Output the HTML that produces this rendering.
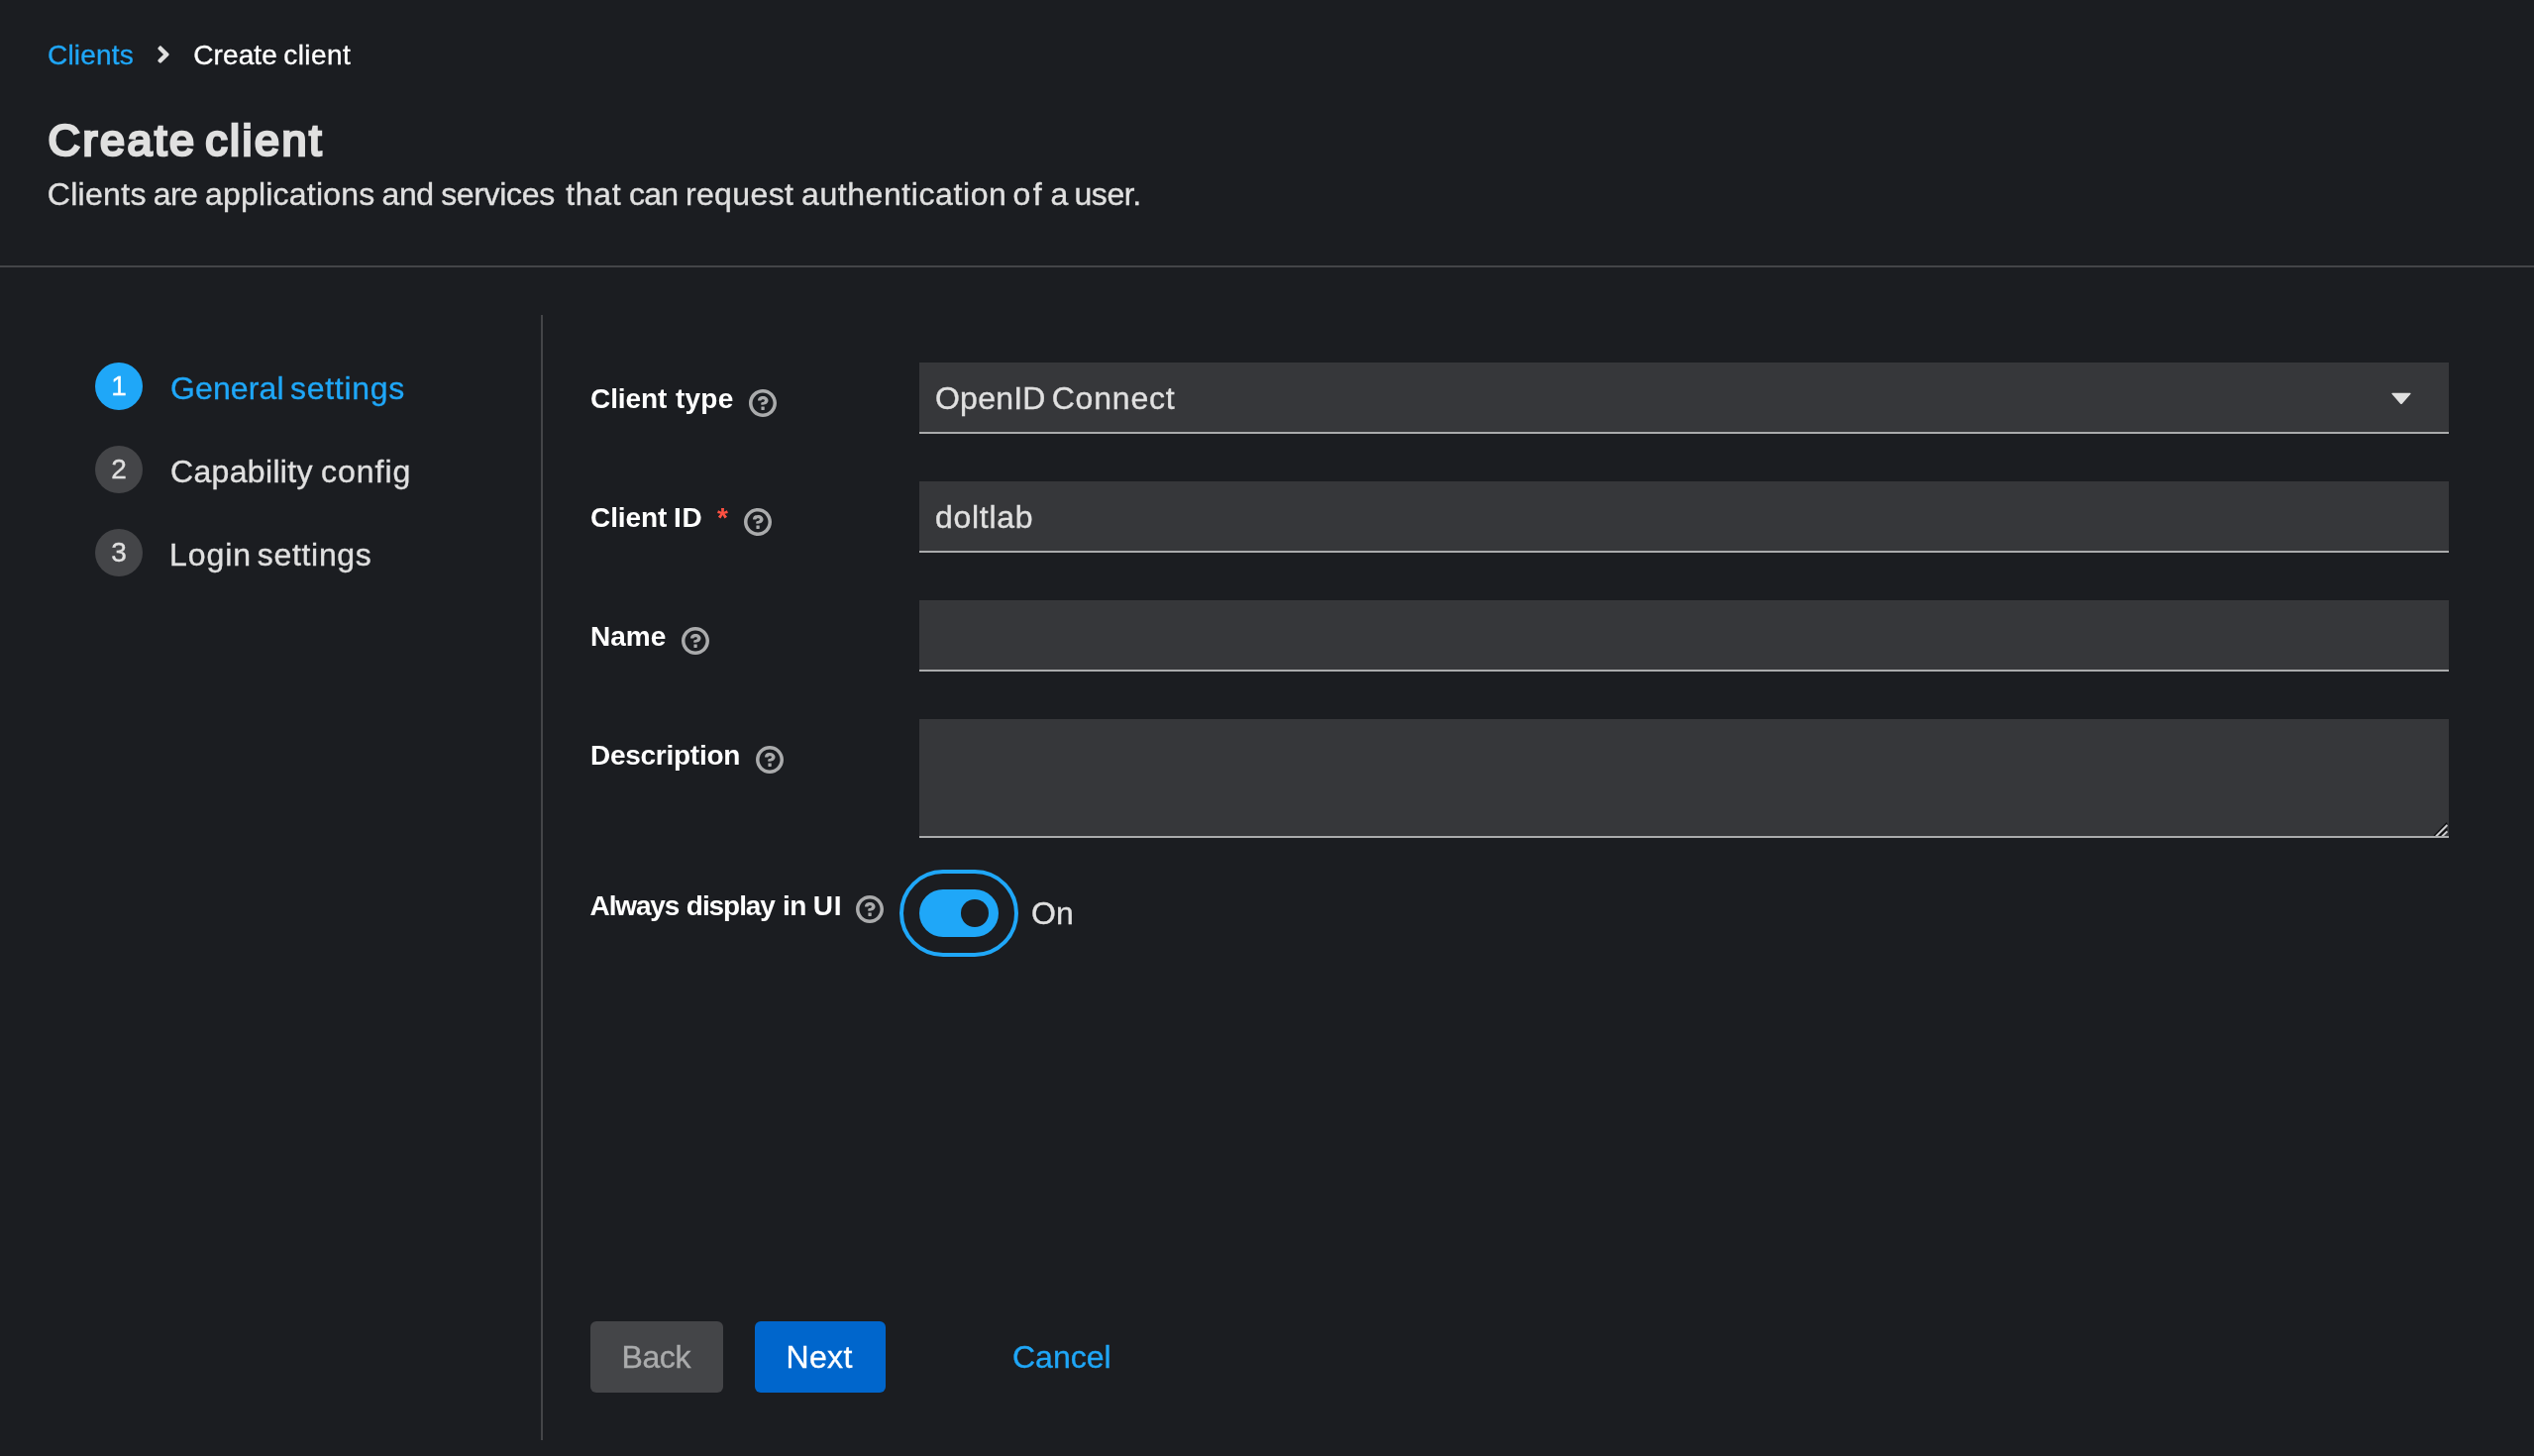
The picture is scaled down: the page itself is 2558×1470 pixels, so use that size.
<!DOCTYPE html>
<html lang="en">
<head>
<meta charset="utf-8">
<title>Create client</title>
<style>
*{box-sizing:border-box;margin:0;padding:0}
html,body{width:2558px;height:1470px;background:#1b1d21}
body{position:relative;font-family:"Liberation Sans",sans-serif;color:#e0e0e0;-webkit-font-smoothing:antialiased}
#app{position:absolute;left:0;top:0;width:2558px;height:1470px;will-change:transform}
.t{position:absolute;white-space:nowrap;line-height:1;display:block}
a{color:#1fa7f8;text-decoration:none}
/* header */
.bc,.desc,.nav,.val,.num,.btn span{-webkit-text-stroke:.35px currentColor}
.bc{font-size:28px}
.bc.cur{color:#fff}
h1.t{font-size:45px;font-weight:400;color:#e0e0e0;-webkit-text-stroke:2.7px #e0e0e0}
.desc{font-size:32px}
.w{position:absolute;top:0;white-space:pre}
.hr{position:absolute;left:0;top:268px;width:2558px;height:2px;background:#444548}
.vr{position:absolute;left:546px;top:318px;width:2px;height:1136px;background:#444548}
/* nav */
.num{position:absolute;left:96px;width:48px;height:48px;border-radius:50%;background:#444548;color:#e0e0e0;font-size:28px;line-height:48px;text-align:center}
.num.on{background:#1fa7f8;color:#fff}
.nav{font-size:32px}
.nav.on{color:#1fa7f8}
/* form */
.lbl{font-size:28px;font-weight:700;color:#fff}
.req{font-size:28px;font-weight:700;color:#fe5142}
.help{position:absolute;width:28px;height:28px;fill:#aaabac}
.fc{position:absolute;left:928px;width:1544px;height:72px;background:#36373a;border-bottom:2px solid #aaabac}
.val{font-size:32px}
.sw{position:absolute;left:928px;top:898px;width:80px;height:48px;border-radius:24px;background:#1fa7f8;outline:4px solid #1fa7f8;outline-offset:16px}
.sw i{position:absolute;left:42px;top:10px;width:28px;height:28px;border-radius:50%;background:#1b1d21}
.btn{position:absolute;top:1334px;height:72px;border-radius:6px;font-size:32px}
.btn span{position:absolute;white-space:nowrap;line-height:1}
</style>
</head>
<body>
<div id="app">
<!-- breadcrumb -->
<nav>
  <a class="t bc" style="left:48px;top:42px;letter-spacing:.2px">Clients</a>
  <svg style="position:absolute;left:157.6px;top:41px;width:14px;height:28px" viewBox="0 0 256 512"><path fill="#e0e0e0" d="M224.3 273l-136 136c-9.4 9.4-24.6 9.4-33.9 0l-22.6-22.6c-9.4-9.4-9.4-24.6 0-33.9l96.4-96.4-96.4-96.4c-9.4-9.4-9.4-24.6 0-33.9L54.3 103c9.4-9.4 24.6-9.4 33.9 0l136 136c9.5 9.4 9.5 24.6.1 34z"/></svg>
  <span class="t bc cur" style="left:195px;top:42px"><span style="margin-left:0.14px;letter-spacing:0.13px">Create</span> <span style="margin-left:-1.54px;letter-spacing:0.46px">client</span></span>
</nav>
<h1 class="t" style="left:49px;top:119px"><span style="margin-left:-0.56px;letter-spacing:2.50px">Create</span> <span style="margin-left:-3.92px;letter-spacing:2.47px">client</span></h1>
<p class="t desc" style="left:0;top:180px"><span class="w" style="left:47.8px;letter-spacing:0.30px">Clients </span><span class="w" style="left:154.7px;letter-spacing:-0.55px">are </span><span class="w" style="left:207.0px;letter-spacing:0.20px">applications </span><span class="w" style="left:385.6px;letter-spacing:-0.50px">and </span><span class="w" style="left:445.2px;letter-spacing:-0.34px">services </span><span class="w" style="left:571.2px;letter-spacing:0.67px">that </span><span class="w" style="left:634.9px;letter-spacing:-0.75px">can </span><span class="w" style="left:691.9px;letter-spacing:0.38px">request </span><span class="w" style="left:809.0px;letter-spacing:0.58px">authentication </span><span class="w" style="left:1022.5px;letter-spacing:2.50px">of </span><span class="w" style="left:1060.4px;letter-spacing:0.00px">a </span><span class="w" style="left:1084.4px;letter-spacing:-0.40px">user. </span></p>
<div class="hr"></div>
<div class="vr"></div>

<!-- wizard nav -->
<div class="num on" style="top:366px">1</div>
<a class="t nav on" style="left:172px;top:376px;"><span style="letter-spacing:0.12px">General</span> <span style="margin-left:-2.52px;letter-spacing:0.70px">settings</span></a>
<div class="num" style="top:450px">2</div>
<span class="t nav" style="left:172px;top:460px;"><span style="letter-spacing:0.33px">Capability</span> <span style="margin-left:-0.70px;letter-spacing:0.97px">config</span></span>
<div class="num" style="top:534px">3</div>
<span class="t nav" style="left:171px;top:544px;"><span style="letter-spacing:0.92px">Login</span> <span style="margin-left:-2.94px;letter-spacing:0.67px">settings</span></span>

<!-- form -->
<label class="t lbl" style="left:597px;top:389px"><span style="margin-left:-0.98px;letter-spacing:-0.11px">Client</span> <span style="margin-left:0.98px;letter-spacing:0.28px">type</span></label>
<div class="fc" style="top:366px"><span class="t val" style="left:16px;top:20px;"><span style="letter-spacing:0.22px">OpenID</span> <span style="margin-left:-2.80px;letter-spacing:0.80px">Connect</span></span>
  <svg style="position:absolute;left:1484px;top:29px;width:24px;height:16px" viewBox="0 0 24 16"><path d="M3.2 1.8 H20.8 Q22.4 1.8 21.3 3 L13 12.6 Q12 13.6 11 12.6 L2.7 3 Q1.6 1.8 3.2 1.8 Z" fill="#e0e0e0"/></svg>
</div>

<label class="t lbl" style="left:597px;top:509px;"><span style="margin-left:-0.98px;letter-spacing:-0.11px">Client</span> <span style="margin-left:-0.84px;letter-spacing:0.56px">ID</span></label>
<span class="t req" style="left:724px;top:509px">*</span>
<div class="fc" style="top:486px"><span class="t val" style="left:16px;top:20px;letter-spacing:.72px">doltlab</span></div>

<label class="t lbl" style="left:596px;top:629px">Name</label>
<div class="fc" style="top:606px"></div>

<label class="t lbl" style="left:596px;top:749px;letter-spacing:-.27px">Description</label>
<div class="fc" style="top:726px;height:120px">
  <svg style="position:absolute;right:0;bottom:0;width:18px;height:18px" viewBox="0 0 18 18"><g fill="none"><path d="M3.1 18 L16.1 4.7" stroke="#0b0b0d" stroke-width="1.5"/><path d="M5 18.4 L16.4 7" stroke="#cfcfd1" stroke-width="1.9"/><path d="M8.6 18 L16.1 10.9" stroke="#0b0b0d" stroke-width="1.5"/><path d="M11.2 18.4 L16.4 13.4" stroke="#cfcfd1" stroke-width="1.9"/></g></svg>
</div>

<label class="t lbl" style="left:596px;top:901px;"><span style="margin-left:-0.42px;letter-spacing:-1.15px">Always</span> <span style="margin-left:-0.14px;letter-spacing:-1.07px">display</span> <span style="margin-left:0.42px;letter-spacing:-0.70px">in</span> <span style="margin-left:-0.70px;letter-spacing:0.84px">UI</span></label>
<div class="sw"><i></i></div>
<span class="t val" style="left:1041px;top:906px">On</span>

<!-- footer -->
<div class="btn" style="left:596px;width:134px;background:#444548;color:#aaabac"><span style="left:31.5px;top:20px;letter-spacing:-.4px">Back</span></div>
<div class="btn" style="left:762px;width:132px;background:#06c;color:#fff"><span style="left:31.5px;top:20px;letter-spacing:.35px">Next</span></div>
<a class="btn" style="left:990px;width:162px"><span style="left:32px;top:20px">Cancel</span></a>

<!-- help icons -->
<svg class="help" viewBox="0 0 1024 1024" style="left:756px;top:393px"><path d="M521.3,576 C627.5,576 713.7,502 713.7,413.7 C713.7,325.4 627.6,253.6 521.3,253.6 C366,253.6 334.5,337.7 329.2,407.2 C329.2,414.3 335.2,416 343.5,416 L445,416 C450.5,416 458,415.5 460.8,406.5 C460.8,362.6 582.9,357.1 582.9,413.6 C582.9,441.9 556.2,470.9 521.3,473 C486.4,475.1 447.3,479.8 447.3,521.7 L447.3,553.8 C447.3,570.8 456.1,576 472,576 C487.9,576 521.3,576 521.3,576 M575.3,751.3 L575.3,655.3 C575.3,651.7 574.1,648.8 571.8,646.5 C569.5,644.2 566.6,643 563,643 L467,643 C463.4,643 460.5,644.2 458.2,646.5 C455.9,648.8 454.7,651.7 454.7,655.3 L454.7,751.3 C454.7,754.9 455.9,757.8 458.2,760.1 C460.5,762.4 463.4,763.6 467,763.6 L563,763.6 C566.6,763.6 569.5,762.4 571.8,760.1 C574.1,757.8 575.3,754.9 575.3,751.3 M512,896 C300.2,896 128,723.9 128,512 C128,300.3 300.2,128 512,128 C723.8,128 896,300.2 896,512 C896,723.8 723.7,896 512,896 M512.1,0 C229.7,0 0,229.8 0,512 C0,794.2 229.8,1024 512.1,1024 C794.4,1024 1024,794.3 1024,512 C1024,229.7 794.4,0 512.1,0"/></svg>
<svg class="help" viewBox="0 0 1024 1024" style="left:751px;top:513px"><path d="M521.3,576 C627.5,576 713.7,502 713.7,413.7 C713.7,325.4 627.6,253.6 521.3,253.6 C366,253.6 334.5,337.7 329.2,407.2 C329.2,414.3 335.2,416 343.5,416 L445,416 C450.5,416 458,415.5 460.8,406.5 C460.8,362.6 582.9,357.1 582.9,413.6 C582.9,441.9 556.2,470.9 521.3,473 C486.4,475.1 447.3,479.8 447.3,521.7 L447.3,553.8 C447.3,570.8 456.1,576 472,576 C487.9,576 521.3,576 521.3,576 M575.3,751.3 L575.3,655.3 C575.3,651.7 574.1,648.8 571.8,646.5 C569.5,644.2 566.6,643 563,643 L467,643 C463.4,643 460.5,644.2 458.2,646.5 C455.9,648.8 454.7,651.7 454.7,655.3 L454.7,751.3 C454.7,754.9 455.9,757.8 458.2,760.1 C460.5,762.4 463.4,763.6 467,763.6 L563,763.6 C566.6,763.6 569.5,762.4 571.8,760.1 C574.1,757.8 575.3,754.9 575.3,751.3 M512,896 C300.2,896 128,723.9 128,512 C128,300.3 300.2,128 512,128 C723.8,128 896,300.2 896,512 C896,723.8 723.7,896 512,896 M512.1,0 C229.7,0 0,229.8 0,512 C0,794.2 229.8,1024 512.1,1024 C794.4,1024 1024,794.3 1024,512 C1024,229.7 794.4,0 512.1,0"/></svg>
<svg class="help" viewBox="0 0 1024 1024" style="left:688px;top:633px"><path d="M521.3,576 C627.5,576 713.7,502 713.7,413.7 C713.7,325.4 627.6,253.6 521.3,253.6 C366,253.6 334.5,337.7 329.2,407.2 C329.2,414.3 335.2,416 343.5,416 L445,416 C450.5,416 458,415.5 460.8,406.5 C460.8,362.6 582.9,357.1 582.9,413.6 C582.9,441.9 556.2,470.9 521.3,473 C486.4,475.1 447.3,479.8 447.3,521.7 L447.3,553.8 C447.3,570.8 456.1,576 472,576 C487.9,576 521.3,576 521.3,576 M575.3,751.3 L575.3,655.3 C575.3,651.7 574.1,648.8 571.8,646.5 C569.5,644.2 566.6,643 563,643 L467,643 C463.4,643 460.5,644.2 458.2,646.5 C455.9,648.8 454.7,651.7 454.7,655.3 L454.7,751.3 C454.7,754.9 455.9,757.8 458.2,760.1 C460.5,762.4 463.4,763.6 467,763.6 L563,763.6 C566.6,763.6 569.5,762.4 571.8,760.1 C574.1,757.8 575.3,754.9 575.3,751.3 M512,896 C300.2,896 128,723.9 128,512 C128,300.3 300.2,128 512,128 C723.8,128 896,300.2 896,512 C896,723.8 723.7,896 512,896 M512.1,0 C229.7,0 0,229.8 0,512 C0,794.2 229.8,1024 512.1,1024 C794.4,1024 1024,794.3 1024,512 C1024,229.7 794.4,0 512.1,0"/></svg>
<svg class="help" viewBox="0 0 1024 1024" style="left:763px;top:753px"><path d="M521.3,576 C627.5,576 713.7,502 713.7,413.7 C713.7,325.4 627.6,253.6 521.3,253.6 C366,253.6 334.5,337.7 329.2,407.2 C329.2,414.3 335.2,416 343.5,416 L445,416 C450.5,416 458,415.5 460.8,406.5 C460.8,362.6 582.9,357.1 582.9,413.6 C582.9,441.9 556.2,470.9 521.3,473 C486.4,475.1 447.3,479.8 447.3,521.7 L447.3,553.8 C447.3,570.8 456.1,576 472,576 C487.9,576 521.3,576 521.3,576 M575.3,751.3 L575.3,655.3 C575.3,651.7 574.1,648.8 571.8,646.5 C569.5,644.2 566.6,643 563,643 L467,643 C463.4,643 460.5,644.2 458.2,646.5 C455.9,648.8 454.7,651.7 454.7,655.3 L454.7,751.3 C454.7,754.9 455.9,757.8 458.2,760.1 C460.5,762.4 463.4,763.6 467,763.6 L563,763.6 C566.6,763.6 569.5,762.4 571.8,760.1 C574.1,757.8 575.3,754.9 575.3,751.3 M512,896 C300.2,896 128,723.9 128,512 C128,300.3 300.2,128 512,128 C723.8,128 896,300.2 896,512 C896,723.8 723.7,896 512,896 M512.1,0 C229.7,0 0,229.8 0,512 C0,794.2 229.8,1024 512.1,1024 C794.4,1024 1024,794.3 1024,512 C1024,229.7 794.4,0 512.1,0"/></svg>
<svg class="help" viewBox="0 0 1024 1024" style="left:864px;top:904px"><path d="M521.3,576 C627.5,576 713.7,502 713.7,413.7 C713.7,325.4 627.6,253.6 521.3,253.6 C366,253.6 334.5,337.7 329.2,407.2 C329.2,414.3 335.2,416 343.5,416 L445,416 C450.5,416 458,415.5 460.8,406.5 C460.8,362.6 582.9,357.1 582.9,413.6 C582.9,441.9 556.2,470.9 521.3,473 C486.4,475.1 447.3,479.8 447.3,521.7 L447.3,553.8 C447.3,570.8 456.1,576 472,576 C487.9,576 521.3,576 521.3,576 M575.3,751.3 L575.3,655.3 C575.3,651.7 574.1,648.8 571.8,646.5 C569.5,644.2 566.6,643 563,643 L467,643 C463.4,643 460.5,644.2 458.2,646.5 C455.9,648.8 454.7,651.7 454.7,655.3 L454.7,751.3 C454.7,754.9 455.9,757.8 458.2,760.1 C460.5,762.4 463.4,763.6 467,763.6 L563,763.6 C566.6,763.6 569.5,762.4 571.8,760.1 C574.1,757.8 575.3,754.9 575.3,751.3 M512,896 C300.2,896 128,723.9 128,512 C128,300.3 300.2,128 512,128 C723.8,128 896,300.2 896,512 C896,723.8 723.7,896 512,896 M512.1,0 C229.7,0 0,229.8 0,512 C0,794.2 229.8,1024 512.1,1024 C794.4,1024 1024,794.3 1024,512 C1024,229.7 794.4,0 512.1,0"/></svg>
</div>
</body>
</html>
